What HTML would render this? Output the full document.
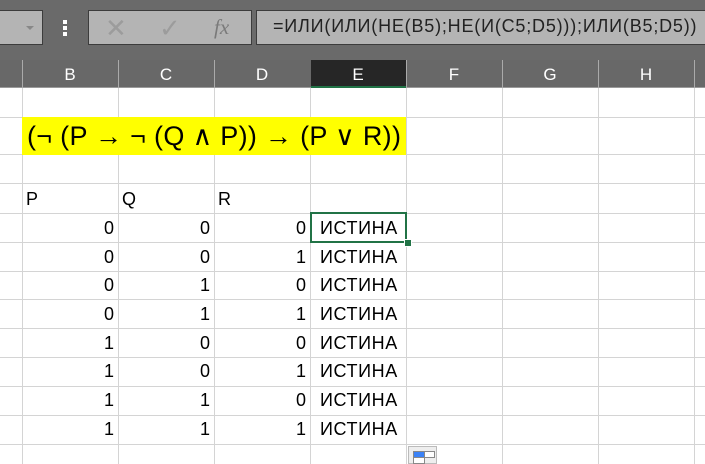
<!DOCTYPE html>
<html><head><style>
body{margin:0;width:705px;height:464px;overflow:hidden;background:#fff;font-family:"Liberation Sans",sans-serif;position:relative}
.a{position:absolute}
.tb{left:0;top:0;width:705px;height:60px;background:#6a6a6a}
.box{background:#b4b4b4;border:1px solid #3c3c3c;box-sizing:border-box}
.hdr{top:60px;height:28px;background:#686868;left:0;width:705px;border-bottom:1px solid #9a9a9a;box-sizing:border-box}
.hc{top:60px;height:27px;color:#fff;font-size:17px;line-height:30px;text-align:center;width:96px}
.vs{top:60px;height:28px;width:1px;background:#aaa}
.vl{top:88px;height:376px;width:1px;background:#d4d4d4}
.hl{left:0;width:705px;height:1px;background:#d4d4d4}
.c{font-size:18px;color:#000;line-height:30px}
.n{text-align:right;width:92px}
</style></head><body>
<div class="a tb"></div>
<div class="a box" style="left:-2px;top:10px;width:45px;height:35px"><div class="a" style="left:27px;top:15px;border:4px solid transparent;border-top:4px solid #888;border-bottom:0"></div></div>
<div class="a" style="left:63px;top:20px;width:4px;height:4px;background:#fff;box-shadow:0 6px #fff,0 12px #fff"></div>
<div class="a box" style="left:88px;top:10px;width:164px;height:35px">
<div class="a" style="left:16px;top:2px;font-size:26px;color:#9c9c9c">✕</div>
<div class="a" style="left:70px;top:2px;font-size:26px;color:#9c9c9c">✓</div>
<div class="a" style="left:125px;top:4px;font-size:21px;color:#7a7a7a;font-family:'Liberation Serif',serif;font-style:italic">fx</div>
</div>
<div class="a box" style="left:256px;top:10px;width:460px;height:35px"><div class="a" style="left:16px;top:5px;font-size:18px;letter-spacing:0.8px;color:#222;font-family:'Liberation Sans','DejaVu Sans',sans-serif;white-space:nowrap">=ИЛИ(ИЛИ(НЕ(B5);НЕ(И(C5;D5)));ИЛИ(B5;D5))</div></div>
<div class="a hdr"></div>
<div class="a" style="left:311px;top:60px;width:95px;height:28px;background:#262626;border-bottom:2px solid #217346;box-sizing:border-box"></div>
<div class="a vs" style="left:22px"></div><div class="a vs" style="left:118px"></div><div class="a vs" style="left:214px"></div><div class="a vs" style="left:406px"></div><div class="a vs" style="left:502px"></div><div class="a vs" style="left:598px"></div><div class="a vs" style="left:694px"></div>
<div class="a hc" style="left:22px">B</div><div class="a hc" style="left:118px">C</div><div class="a hc" style="left:214px">D</div><div class="a hc" style="left:310px">E</div><div class="a hc" style="left:406px">F</div><div class="a hc" style="left:502px">G</div><div class="a hc" style="left:598px">H</div>
<div class="a vl" style="left:22px"></div><div class="a vl" style="left:118px"></div><div class="a vl" style="left:214px"></div><div class="a vl" style="left:310px"></div><div class="a vl" style="left:406px"></div><div class="a vl" style="left:502px"></div><div class="a vl" style="left:598px"></div><div class="a vl" style="left:694px"></div>
<div class="a hl" style="top:117px"></div><div class="a hl" style="top:154px"></div><div class="a hl" style="top:183px"></div><div class="a hl" style="top:213px"></div><div class="a hl" style="top:242px"></div><div class="a hl" style="top:271px"></div><div class="a hl" style="top:299px"></div><div class="a hl" style="top:328px"></div><div class="a hl" style="top:357px"></div><div class="a hl" style="top:386px"></div><div class="a hl" style="top:415px"></div><div class="a hl" style="top:444px"></div>
<div class="a" style="left:22px;top:117px;width:384px;height:38px;background:#ffff00"></div>
<div class="a" style="left:27px;top:117px;height:38px;line-height:38px;font-size:27px;letter-spacing:0.3px;font-family:'Liberation Sans','DejaVu Sans',sans-serif;white-space:nowrap">(¬ (P → ¬ (Q ∧ P)) → (P ∨ R))</div>
<div class="a c" style="left:26px;top:184px">P</div><div class="a c" style="left:122px;top:184px">Q</div><div class="a c" style="left:218px;top:184px">R</div>
<div id="rows"></div>
<div class="a" style="left:310px;top:212px;width:97px;height:31px;border:2px solid #217346;box-sizing:border-box"></div>
<div class="a" style="left:404px;top:239px;width:6px;height:6px;background:#217346;border:1px solid #fff"></div>
<div class="a" style="left:408px;top:446px;width:29px;height:18px;background:#eee;border:1px solid #bbb;box-sizing:border-box"><div class="a" style="left:4px;top:4px;width:10px;height:5px;background:#3b82f6;border:1px solid #888"></div><div class="a" style="left:15px;top:4px;width:9px;height:5px;border:1px solid #888;background:#fff"></div><div class="a" style="left:4px;top:10px;width:10px;height:5px;border:1px solid #888;background:#fff"></div></div>
<script>
var d=[[0,0,0],[0,0,1],[0,1,0],[0,1,1],[1,0,0],[1,0,1],[1,1,0],[1,1,1]],tops=[213,242,270,299,328,356,385,414],h='';
d.forEach(function(r,i){var t=tops[i];[22,118,214].forEach(function(x,j){h+='<div class="a c n" style="left:'+x+'px;top:'+t+'px">'+r[j]+'</div>'});h+='<div class="a c" style="left:320px;top:'+t+'px;letter-spacing:0.6px;font-family:\'Liberation Sans\',\'DejaVu Sans\',sans-serif">ИСТИНА</div>'});
document.getElementById('rows').outerHTML=h;
</script>
</body></html>
